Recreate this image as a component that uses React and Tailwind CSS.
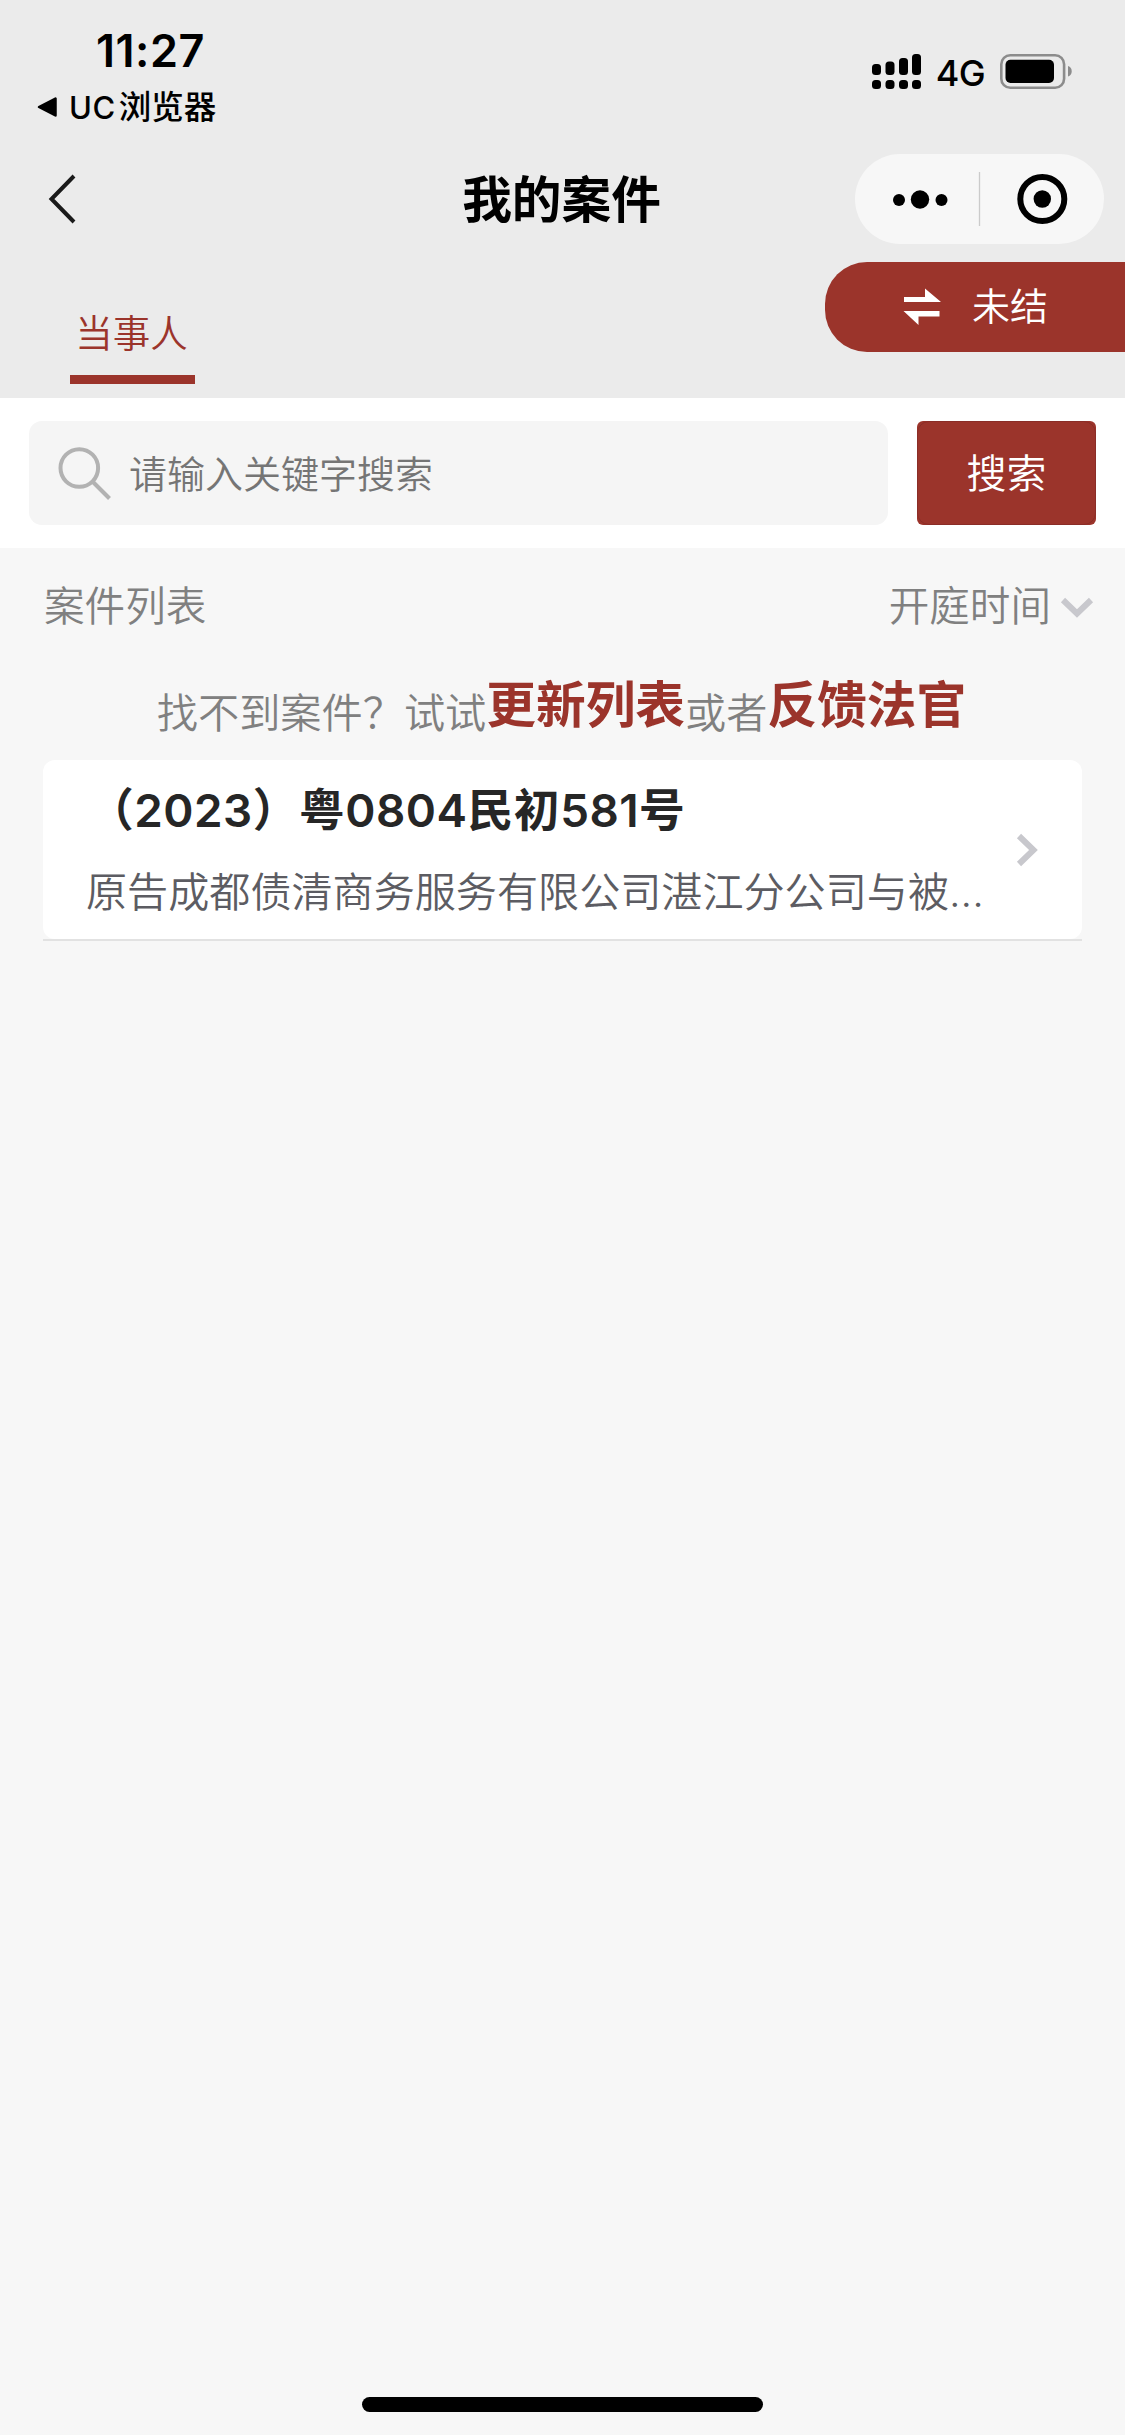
import React from 'react';

const cases = [
    { id: 1, number: '（2023）粤0804民初581号', summary: '原告成都债清商务服务有限公司湛江分公司与被...' },
];

const SignalIcon = () => (
    <svg width="49" height="35" viewBox="0 0 49 35" fill="black">
        <rect x="0" y="10" width="9" height="11" rx="3.5" />
        <rect x="13.5" y="7.5" width="9" height="13.5" rx="3.5" />
        <rect x="27" y="4" width="9" height="17" rx="3.5" />
        <rect x="40" y="0" width="9" height="21" rx="3.5" />
        <rect x="0" y="26" width="9" height="9" rx="3.5" />
        <rect x="13.5" y="26" width="9" height="9" rx="3.5" />
        <rect x="27" y="26" width="9" height="9" rx="3.5" />
        <rect x="40" y="26" width="9" height="9" rx="3.5" />
    </svg>
);

const BatteryIcon = () => (
    <svg width="73" height="35" viewBox="0 0 73 35">
        <rect x="1.3" y="1.3" width="62.8" height="32.4" rx="9" fill="none" stroke="#8c8c8c" strokeWidth="2.6" />
        <rect x="5.5" y="5.8" width="48.5" height="23.2" rx="5" fill="black" />
        <path d="M68 12c5 1.5 5 9 0 10.5z" fill="#8c8c8c" />
    </svg>
);

const SwapIcon = () => (
    <svg width="38" height="38" viewBox="0 0 38 38" fill="white">
        <path d="M1 9h21V0.5L38 14H1z" />
        <path d="M0.5 23H36.5v5.5H15.5V37z" />
    </svg>
);

const StatusBar = () => (
    <div className="h-[154px] flex justify-between">
        <div className="pl-[36px] pt-[26px]">
            <div className="pl-[60px] h-[49px] flex items-center text-[45px] font-semibold leading-none tracking-[0.5px]">11:27</div>
            <div className="mt-[7px] h-[50px] flex items-center leading-none">
                <svg width="22" height="22" viewBox="0 0 22 22" className="mr-[11px]">
                    <path d="M3 11L19.5 2.5V19.5z" stroke="black" strokeWidth="2.5" strokeLinejoin="round" />
                </svg>
                <span className="text-[31px] tracking-[0.5px] font-[450]">UC</span>
                <span className="ml-[3px] pt-[2px] text-[32.5px] font-medium">浏览器</span>
            </div>
        </div>
        <div className="pr-[52px] pt-[54px] h-[89px] flex items-center">
            <SignalIcon />
            <span className="ml-[14px] mr-[14px] w-[51px] pt-[2px] text-[36px] leading-none text-center tracking-[-0.5px] font-[450]">4G</span>
            <BatteryIcon />
        </div>
    </div>
);

const NavBar = () => (
    <div className="h-[90px] grid grid-cols-3 items-center">
        <div className="pl-[47px]">
            <svg width="30" height="52" viewBox="0 0 30 52" fill="none" stroke="#1a1a1a" strokeWidth="4">
                <path d="M27 3L4.5 26L27 49" />
            </svg>
        </div>
        <h1 className="pt-[3px] pr-[2px] text-center text-[49.7px] font-semibold leading-none">我的案件</h1>
        <div className="mr-[21px] w-[249px] h-[90px] justify-self-end rounded-full bg-[#f7f7f7] flex items-center">
            <svg width="249" height="90" viewBox="0 0 249 90">
                <circle cx="44" cy="46" r="6" />
                <circle cx="65" cy="45.5" r="9.2" />
                <circle cx="86.5" cy="46" r="6" />
                <path d="M124.5 18v54" stroke="#cbcbcb" strokeWidth="1.3" />
                <circle cx="187.3" cy="45" r="22" fill="none" stroke="black" strokeWidth="6" />
                <circle cx="187.3" cy="45" r="8.7" />
            </svg>
        </div>
    </div>
);

const Tabs = () => (
    <div className="h-[154px] flex justify-between items-start">
        <div className="ml-[70px] mt-[57px] w-[125px] h-[83px] border-b-9 border-[#9b342b] text-center">
            <span className="block pt-[14px] pr-[2px] text-[37.5px] leading-none font-[350] text-[#9b342b]">当事人</span>
        </div>
        <button className="mt-[18px] w-[300px] h-[90px] rounded-l-[42px] bg-[#9b342b] flex items-center pl-[78px] text-white">
            <SwapIcon />
            <span className="ml-[31px] mb-[2px] text-[38px] leading-none font-[350]">未结</span>
        </button>
    </div>
);

const SearchBar = () => (
    <div className="h-[150px] bg-white flex items-center px-[29px] gap-[29px]">
        <div className="flex-1 h-[104px] rounded-[13px] bg-[#f5f5f5] flex items-center pl-[29px]">
            <svg width="54" height="54" viewBox="0 0 54 54" fill="none" stroke="#b2b2b2" strokeWidth="4">
                <circle cx="21.3" cy="22" r="18.8" />
                <path d="M34.5 35.5L51.5 52.5" />
            </svg>
            <span className="ml-[17px] pt-[1px] text-[38px] leading-none font-[350] text-[#757575]">请输入关键字搜索</span>
        </div>
        <button className="w-[179px] h-[104px] rounded-[6px] bg-[#9b342b] text-white text-[40px] leading-none font-[350]">
            <span className="flex w-full h-full pt-[2px] items-center justify-center rounded-[12px] border border-[#8a2d27]">搜索</span>
        </button>
    </div>
);

const CaseCard = ({ item }) => (
    <div className="border-b-2 border-[#e2e2e2]">
        <div className="h-[179px] rounded-[12px] bg-white flex items-center justify-between pl-[43px] pr-[42px]">
            <div className="h-full pt-[27px]">
                <h3 className="pl-[2px] h-[48px] flex items-center text-[45.8px] leading-none font-semibold tracking-[0.5px] text-[#262626] whitespace-nowrap">{item.number}</h3>
                <p className="mt-[29px] h-[56px] leading-[56px] text-[41.1px] font-[350] text-[#5c5c62] whitespace-nowrap">{item.summary}</p>
            </div>
            <svg width="24" height="34" viewBox="0 0 24 34" fill="none" stroke="#c8c8cd" strokeWidth="6">
                <path d="M3 3L17.5 17L3 31" />
            </svg>
        </div>
    </div>
);

const App = () => {
    return (
        <div className="w-[1125px] h-[2435px] bg-[#f7f7f7] flex flex-col overflow-hidden text-black font-[Inter,'Noto_Sans_CJK_SC',sans-serif]">
            <header className="h-[398px] bg-[#ebebeb]">
                <StatusBar />
                <NavBar />
                <Tabs />
            </header>

            <SearchBar />

            <main className="flex-1 px-[43px]">
                <div className="h-[117px] pt-[1px] flex items-center justify-between text-[40.6px] leading-none font-[350] text-[#808080]">
                    <span className="pl-[1px]">案件列表</span>
                    <div className="flex items-center mr-[-12px]">
                        <span>开庭时间</span>
                        <svg width="34" height="22" viewBox="0 0 34 22" className="ml-[9px]" fill="none" stroke="#c8c8cd" strokeWidth="6">
                            <path d="M3 4L17 17.5L31 4" />
                        </svg>
                    </div>
                </div>

                {/* hint row */}
                <div className="h-[95px] pr-[2px] flex justify-center items-center leading-none text-[41.2px] font-[350] text-[#808080] whitespace-nowrap">
                    <span className="pt-[2px]">找不到案件？试试</span>
                    <a className="pb-[14px] text-[49.7px] font-bold text-[#9b342b]">更新列表</a>
                    <span className="pt-[2px]">或者</span>
                    <a className="pb-[14px] text-[49.7px] font-bold text-[#9b342b]">反馈法官</a>
                </div>

                {cases.map((item) => (
                    <CaseCard key={item.id} item={item} />
                ))}
            </main>

            {/* home indicator */}
            <div className="mb-[23px] self-center w-[401px] h-[15px] rounded-full bg-black" />
        </div>
    );
};

export default App;
